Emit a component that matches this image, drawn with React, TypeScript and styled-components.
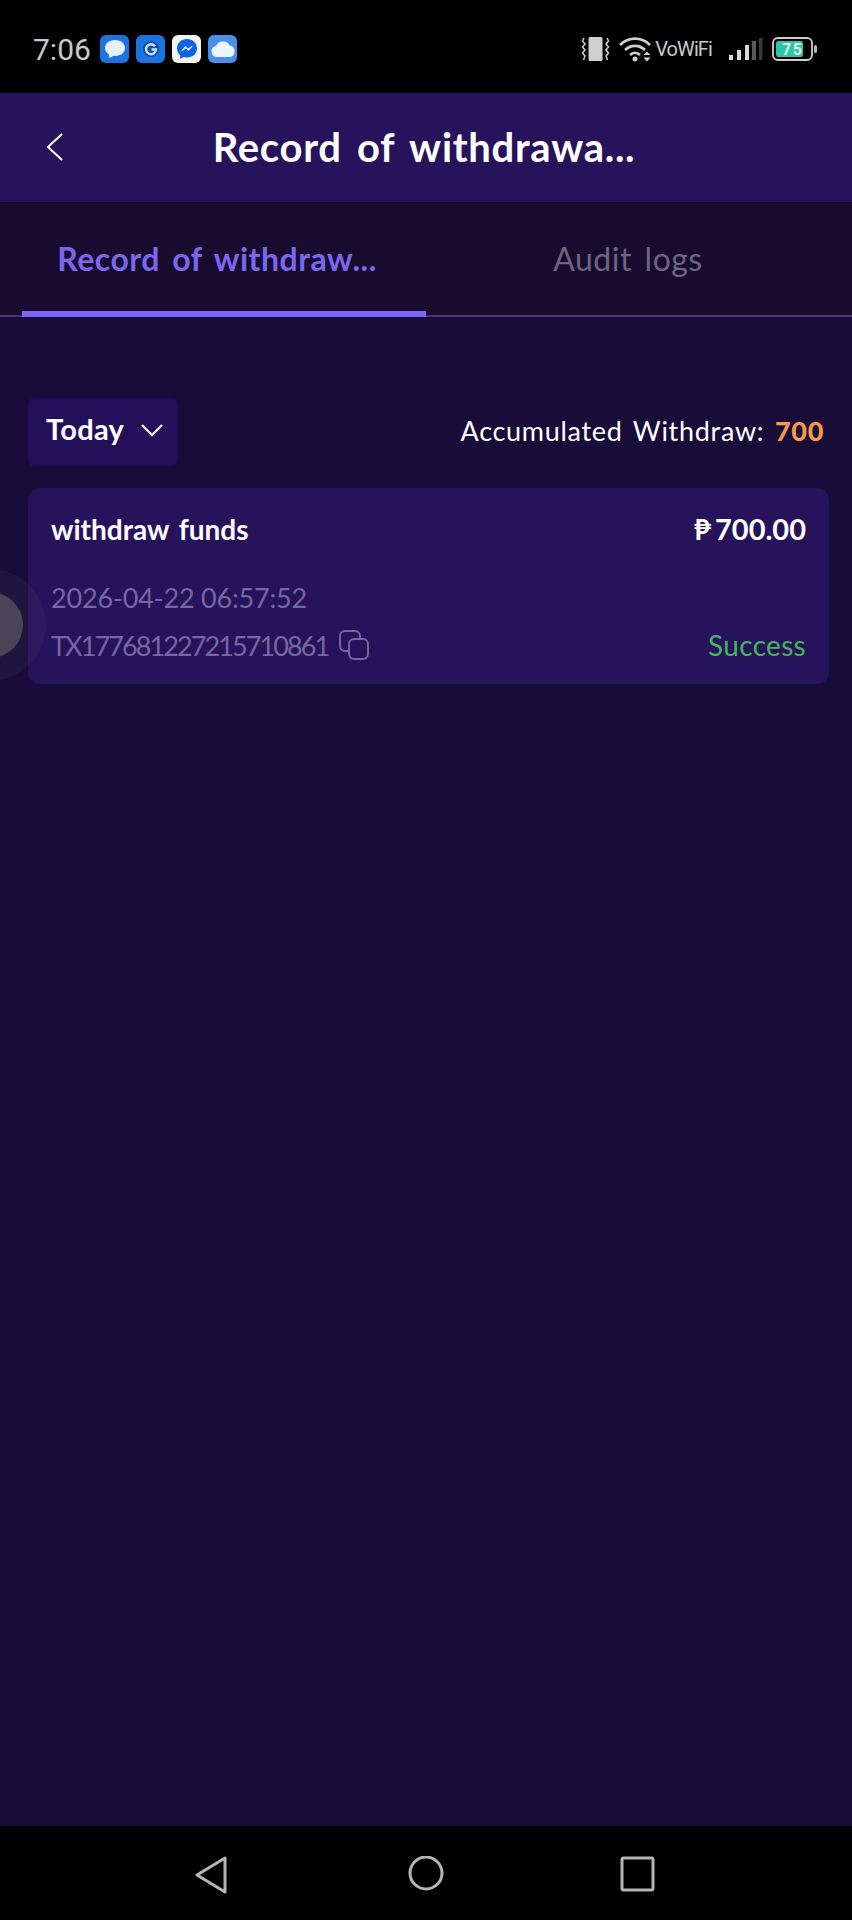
import React from 'react'
import styled, { createGlobalStyle } from 'styled-components'

const GlobalStyle = createGlobalStyle`
  html, body {
    margin: 0;
    padding: 0;
    background: #000;
  }
  * {
    box-sizing: border-box;
  }
`

const Page = styled.div`
  position: relative;
  width: 852px;
  height: 1920px;
  display: flex;
  flex-direction: column;
  overflow: hidden;
  background: #170d38;
  font-family: Lato, 'Open Sans', sans-serif;
  color: #fff;
`

const StatusBar = styled.div`
  height: 93px;
  flex-shrink: 0;
  background: #000;
  display: flex;
  align-items: flex-start;
  justify-content: space-between;
  padding: 35px 34px 0 33px;
`

const StatusGroup = styled.div`
  display: flex;
  align-items: center;
  height: 28px;
`

const Clock = styled.span`
  font-family: Roboto, sans-serif;
  font-size: 30px;
  color: #c9c9c9;
  width: 67px;
`

const AppIcon = styled.div<{ $bg: string }>`
  width: 29px;
  height: 28px;
  border-radius: 6px;
  margin-right: 7px;
  background: ${p => p.$bg};
  display: flex;
  align-items: center;
  justify-content: center;
`

const VoWifi = styled.span`
  font-family: Roboto, sans-serif;
  font-size: 20px;
  color: #c9c9c9;
  margin: 0 17px 0 3px;
  letter-spacing: -0.9px;
`

const Header = styled.div`
  position: relative;
  height: 109px;
  flex-shrink: 0;
  background: #27125c;
  display: flex;
  align-items: center;
  justify-content: center;
  padding-bottom: 2px;
`

const BackButton = styled.div`
  position: absolute;
  left: 46px;
  top: 39px;
  display: flex;
`

const Title = styled.div`
  font-size: 40px;
  font-weight: 700;
  word-spacing: 5px;
  letter-spacing: 0.7px;
  margin-right: 4px;
`

const Tabs = styled.div`
  height: 115px;
  flex-shrink: 0;
  background: #170c2e;
  border-bottom: 2px solid #48337e;
  display: flex;
  padding: 0 22px;
`

const Tab = styled.div<{ $active?: boolean }>`
  flex: 0 0 50%;
  height: 115px;
  display: flex;
  align-items: center;
  justify-content: center;
  padding-top: 3px;
  padding-right: ${p => (p.$active ? '14px' : '0')};
  font-size: 32px;
  font-weight: ${p => (p.$active ? 700 : 400)};
  word-spacing: 4px;
  letter-spacing: 0.5px;
  color: ${p => (p.$active ? '#7b66f0' : '#6e6480')};
  border-bottom: 6px solid ${p => (p.$active ? '#7b66f0' : 'transparent')};
`

const Content = styled.div`
  flex: 1;
  padding: 81px 23px 0 28px;
`

const FilterRow = styled.div`
  display: flex;
  align-items: center;
  justify-content: space-between;
  padding-right: 5px;
`

const Filter = styled.div`
  width: 150px;
  height: 68px;
  border-radius: 6px;
  background: #23105a;
  display: flex;
  align-items: center;
  padding: 0 0 7px 18px;
  gap: 16px;
  font-size: 29px;
  font-weight: 700;
  letter-spacing: 0.3px;
`

const ChevronWrap = styled.div`
  display: flex;
  padding-top: 3px;
`

const Total = styled.div`
  font-size: 27px;
  word-spacing: 3px;
  letter-spacing: 0.7px;
  padding-bottom: 4px;
`

const TotalValue = styled.span`
  font-weight: 900;
  color: #f5994a;
`

const Card = styled.div`
  margin-top: 22px;
  height: 196px;
  border-radius: 12px;
  background: #27125c;
  padding: 23px 23px 0;
`

const CardRow = styled.div`
  display: flex;
  align-items: center;
  justify-content: space-between;
`

const CardTitle = styled.div`
  font-size: 28px;
  font-weight: 700;
  word-spacing: 3px;
`

const Amount = styled.div`
  display: flex;
  align-items: center;
  gap: 4px;
  font-size: 29px;
  font-weight: 700;
`

const DateText = styled.div`
  margin-top: 35px;
  font-size: 27px;
  letter-spacing: -0.2px;
  color: #75679f;
`

const TxRow = styled(CardRow)`
  margin-top: 14px;
`

const TxId = styled.div`
  display: flex;
  align-items: center;
  gap: 10px;
  font-size: 27px;
  letter-spacing: -1.9px;
  color: #75679f;
`

const Status = styled.div`
  font-size: 28px;
  letter-spacing: 0.3px;
  color: #45b45c;
`

const FloatBall = styled.div`
  position: absolute;
  left: -66px;
  top: 569px;
  width: 112px;
  height: 112px;
  border-radius: 50%;
  background: rgba(120, 115, 135, 0.09);
  display: flex;
  align-items: center;
  justify-content: center;

  &::after {
    content: '';
    width: 66px;
    height: 66px;
    border-radius: 50%;
    background: #4b4458;
  }
`

const NavBar = styled.div`
  height: 94px;
  flex-shrink: 0;
  background: #000;
  display: grid;
  grid-template-columns: repeat(3, 212px);
  justify-content: center;
  justify-items: center;
  align-items: start;
  padding-top: 30px;
`

const NavIcon = styled.svg`
  width: 38px;
  height: 40px;
  fill: none;
  stroke: #b5b5b5;
  stroke-width: 3;
  stroke-linejoin: round;
`

const Bubble = () => (
  <svg width="22" height="20" viewBox="0 0 22 20">
    <path d="M11 1C5 1 1 4.600 1 9c0 2.600 1.500 4.800 3.800 6.200L5.500 19l4-2.200c.5.100 1 .2 1.500.2 6 0 10-3.600 10-8s-4-8-10-8z" fill="#e8f1fc" />
  </svg>
)

const GoogleG = () => (
  <svg width="20" height="20" viewBox="0 0 20 20">
    <circle cx="10" cy="10" r="8" fill="#0f4fb0" />
    <path d="M14 7.200A5 5 0 1 0 15 10.500h-4.500" fill="none" stroke="#cfe2fb" strokeWidth="2.400" />
  </svg>
)

const Messenger = () => (
  <svg width="22" height="22" viewBox="0 0 22 22">
    <path d="M11 1C5.400 1 1 5 1 10.300c0 2.800 1.200 5.200 3.200 6.900V21l3.500-1.900c1 .3 2.100.5 3.300.5 5.600 0 10-4 10-9.300S16.600 1 11 1z" fill="#0f62e6" />
    <path d="M5.500 13l3.800-4.500 2.700 2.400 4.400-2.900-3.800 4.500-2.700-2.400z" fill="#fff" stroke="#fff" strokeWidth="0.600" />
  </svg>
)

const CloudIcon = () => (
  <svg width="26" height="18" viewBox="0 0 26 18">
    <path d="M7 17a5.500 5.500 0 0 1-1-10.900A7.500 7.500 0 0 1 19.600 5.600 5.800 5.800 0 0 1 20 17z" fill="#eef4fc" />
  </svg>
)

const Vibrate = () => (
  <svg width="29" height="26" viewBox="0 0 29 26" style={{ marginRight: 9 }}>
    <rect x="7.500" y="1" width="14" height="24" rx="1.500" fill="#cfcfcf" />
    <path
      d="M3 2l-1.500 3L4 8 1.500 11 4 14l-2.500 3L4 20l-1.500 4M26 2l1.500 3L25 8l2.500 3L25 14l2.500 3L25 20l1.500 4"
      fill="none"
      stroke="#cfcfcf"
      strokeWidth="1.500"
    />
  </svg>
)

const Wifi = () => (
  <svg width="33" height="26" viewBox="0 0 33 26">
    <g fill="none" stroke="#d0d0d0" strokeWidth="2.600">
      <path d="M1 9C9.500 .5 22.500 .5 31 9" />
      <path d="M6 14c6-5.500 14-5.500 20 0" />
      <path d="M11 19c3-3 7-3 10 0" />
    </g>
    <circle cx="16" cy="23" r="2.500" fill="#d0d0d0" />
    <path d="M28 15.500l3.500 3.500h-7zM28 25.500l3.500-4h-7z" fill="#d0d0d0" />
  </svg>
)

const Signal = () => (
  <svg width="34" height="24" viewBox="0 0 34 24">
    <rect x="0" y="18" width="4" height="5" fill="#d8d8d8" />
    <rect x="8" y="13" width="4" height="10" fill="#d8d8d8" />
    <rect x="16" y="8" width="4" height="15" fill="#d8d8d8" />
    <rect x="23" y="4" width="4" height="19" fill="#5a5a5a" />
    <rect x="30" y="1" width="3.500" height="22" fill="#3a3a3a" />
  </svg>
)

const Battery = () => (
  <svg width="46" height="24" viewBox="0 0 46 24" style={{ marginLeft: 9 }}>
    <rect x="1" y="1" width="39" height="22" rx="5" fill="none" stroke="#cfcfcf" strokeWidth="1.800" />
    <rect x="4" y="4" width="27" height="16" rx="2.500" fill="#2fc4a8" />
    <rect x="42" y="8" width="3" height="8" rx="1.500" fill="#b5b5b5" />
    <text x="10" y="18" fontFamily="Roboto, sans-serif" fontSize="16" fontWeight="700" fill="#d5f5ee" letterSpacing="1.500">
      75
    </text>
  </svg>
)

const BackIcon = () => (
  <svg width="18" height="30" viewBox="0 0 18 30" fill="none" stroke="#fff" strokeWidth="2">
    <path d="M16 2L2 15l14 13" />
  </svg>
)

const ChevronIcon = () => (
  <svg width="24" height="14" viewBox="0 0 24 14" fill="none" stroke="#fff" strokeWidth="2">
    <path d="M2 2l10 10L22 2" />
  </svg>
)

const CopyIcon = () => (
  <svg width="32" height="32" viewBox="0 0 32 32" fill="none" stroke="#75679f" strokeWidth="2">
    <path d="M11 22H7a5 5 0 0 1-5-5V7a5 5 0 0 1 5-5h10a5 5 0 0 1 5 5v3" />
    <rect x="11" y="10" width="19" height="20" rx="5" />
  </svg>
)

export default function App() {
  return (
    <Page>
      <GlobalStyle />
      <StatusBar>
        <StatusGroup>
          <Clock>7:06</Clock>
          <AppIcon $bg="#1c74e0"><Bubble /></AppIcon>
          <AppIcon $bg="#1c74e0"><GoogleG /></AppIcon>
          <AppIcon $bg="#f4f4f0"><Messenger /></AppIcon>
          <AppIcon $bg="#4a90ea"><CloudIcon /></AppIcon>
        </StatusGroup>
        <StatusGroup>
          <Vibrate />
          <Wifi />
          <VoWifi>VoWiFi</VoWifi>
          <Signal />
          <Battery />
        </StatusGroup>
      </StatusBar>
      <Header>
        <BackButton><BackIcon /></BackButton>
        <Title>Record of withdrawa...</Title>
      </Header>
      <Tabs>
        <Tab $active>Record of withdraw...</Tab>
        <Tab>Audit logs</Tab>
      </Tabs>
      <Content>
        <FilterRow>
          <Filter>
            Today
            <ChevronWrap><ChevronIcon /></ChevronWrap>
          </Filter>
          <Total>
            Accumulated Withdraw: <TotalValue>700</TotalValue>
          </Total>
        </FilterRow>
        <Card>
          <CardRow>
            <CardTitle>withdraw funds</CardTitle>
            <Amount><span>₱</span><span>700.00</span></Amount>
          </CardRow>
          <DateText>2026-04-22 06:57:52</DateText>
          <TxRow>
            <TxId>
              TX177681227215710861
              <CopyIcon />
            </TxId>
            <Status>Success</Status>
          </TxRow>
        </Card>
      </Content>
      <FloatBall />
      <NavBar>
        <NavIcon viewBox="0 0 38 40">
          <path d="M30 2L2 19l28 17z" />
        </NavIcon>
        <NavIcon viewBox="0 0 38 40">
          <circle cx="19" cy="17" r="16" />
        </NavIcon>
        <NavIcon viewBox="0 0 38 40">
          <rect x="3" y="2" width="31" height="32" rx="1.500" />
        </NavIcon>
      </NavBar>
    </Page>
  )
}
